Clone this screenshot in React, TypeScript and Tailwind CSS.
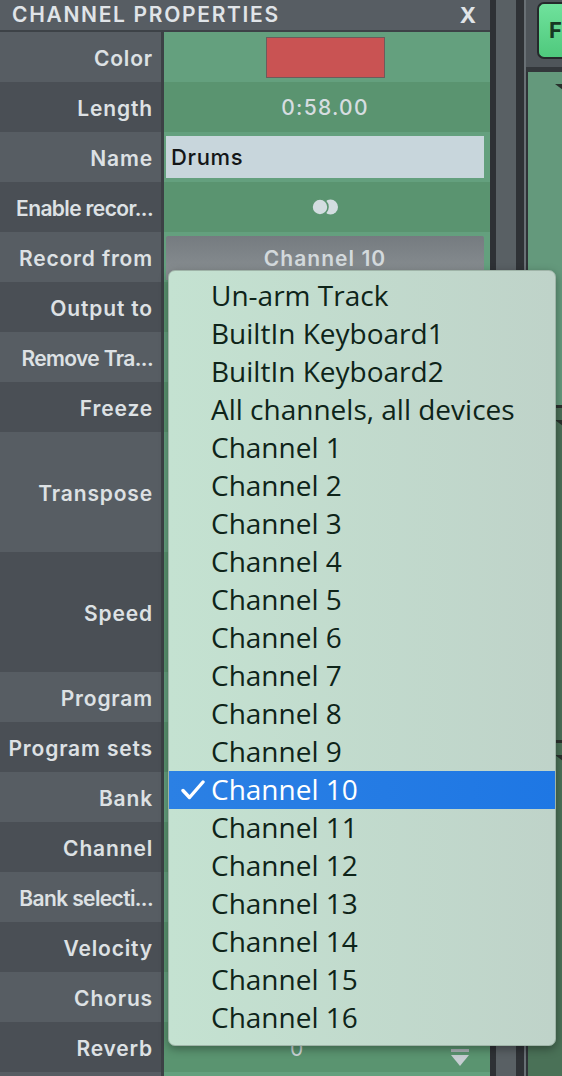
import React from 'react';

type Row = { label: string; tall?: boolean; tight?: boolean };

const ROWS: Row[] = [
  { label: 'Color' },
  { label: 'Length' },
  { label: 'Name' },
  { label: 'Enable recor...', tight: true },
  { label: 'Record from' },
  { label: 'Output to' },
  { label: 'Remove Tra...', tight: true },
  { label: 'Freeze' },
  { label: 'Transpose', tall: true },
  { label: 'Speed', tall: true },
  { label: 'Program' },
  { label: 'Program sets' },
  { label: 'Bank' },
  { label: 'Channel' },
  { label: 'Bank selecti...', tight: true },
  { label: 'Velocity' },
  { label: 'Chorus' },
  { label: 'Reverb' },
  { label: '' },
];

const OPTIONS = [
  'Un-arm Track',
  'BuiltIn Keyboard1',
  'BuiltIn Keyboard2',
  'All channels, all devices',
  ...Array.from({ length: 16 }, (_, i) => `Channel ${i + 1}`),
];

const SELECTED = 'Channel 10';

function CellContent({ index }: { index: number }) {
  switch (index) {
    case 0:
      return (
        <div className="flex h-full items-center justify-center pr-[4px]">
          <div className="h-[41px] w-[119px] border border-[#6d5b5b] bg-[#c95353]" />
        </div>
      );
    case 1:
      return (
        <div className="flex h-full items-center justify-center pr-[4px] pt-[2px] text-[21px] font-medium tracking-[0.06em] text-[#d6dde0]">
          0:58.00
        </div>
      );
    case 2:
      return (
        <div className="flex h-full items-center pl-[2px] pr-[6px]">
          <div className="flex h-[42px] w-full items-center bg-[#c8d6dc] pl-[5px] text-[22px] font-medium tracking-[0.03em] text-[#141618]">
            Drums
          </div>
        </div>
      );
    case 3:
      return (
        <div className="flex h-full items-center justify-center pr-[3px]">
          <svg width="29" height="18" viewBox="0 0 29 18">
            <circle cx="19.5" cy="9" r="7.5" fill="#d3dde0" />
            <circle cx="9" cy="9" r="8" fill="#d3dde0" stroke="#5b9470" strokeWidth="1.6" />
          </svg>
        </div>
      );
    case 4:
      return (
        <div className="flex h-full items-start pl-[2px] pr-[6px] pt-[4px]">
          <div className="flex h-[44px] w-full items-center justify-center rounded-t-[2px] bg-gradient-to-b from-[#757b80] to-[#8b9194] pt-[2px] text-[21px] font-semibold tracking-[0.05em] text-[#d3d9dc]">
            Channel 10
          </div>
        </div>
      );
    case 17:
      return (
        <div className="flex h-full items-center">
          <span className="ml-[126px] pt-[4px] text-[21px] text-[#cdd6d9]">0</span>
          <div className="ml-auto mr-[21px] flex w-[18px] flex-col items-center gap-[3px] pt-[20px]">
            <div className="h-[3px] w-[18px] bg-[#a9b1b5]" />
            <svg width="18" height="11" viewBox="0 0 18 11">
              <path d="M0 0 H18 L9 11 Z" fill="#c6ced2" />
            </svg>
          </div>
        </div>
      );
    default:
      return null;
  }
}

function PropertyRow({ row, index }: { row: Row; index: number }) {
  const light = index % 2 === 0;
  return (
    <div className={`flex shrink-0 ${row.tall ? 'h-[120px]' : 'h-[50px]'}`}>
      <div
        className={`flex w-[161px] items-center justify-end whitespace-nowrap pr-[8px] pt-[3px] text-[21px] font-semibold text-[#dde1e4] ${
          light ? 'bg-[#575d63]' : 'bg-[#4a4f55]'
        } ${row.tight ? 'tracking-[-0.03em]' : 'tracking-[0.04em]'}`}
      >
        {row.label}
      </div>
      <div className="w-[3px] bg-[#3c4145]" />
      <div className={`flex-1 ${light ? 'bg-[#64a07e]' : 'bg-[#5a9470]'}`}>
        <CellContent index={index} />
      </div>
    </div>
  );
}

function Check() {
  return (
    <svg width="24" height="20" viewBox="0 0 24 20" className="ml-[12px]">
      <path d="M2 10.5 L8.5 17.5 L22 2" fill="none" stroke="white" strokeWidth="3.4" strokeLinecap="round" strokeLinejoin="round" />
    </svg>
  );
}

function ChannelMenu() {
  return (
    <div className="absolute left-[168px] top-[270px] h-[776px] w-[388px] overflow-hidden rounded-[7px] border border-[#9fb4a8] bg-gradient-to-r from-[#c4e2d1] to-[#bfd3c9] pt-[6px] shadow-[0_3px_10px_rgba(0,0,0,0.35)] font-['Open_Sans',sans-serif]">
      {OPTIONS.map((opt) => {
        const sel = opt === SELECTED;
        return (
          <div
            key={opt}
            className={`flex h-[38px] items-center text-[28px] leading-none ${
              sel ? 'bg-gradient-to-r from-[#2b80e4] to-[#1e77e4] text-white' : 'text-[#0e2419]'
            }`}
          >
            <span className="flex w-[42px] items-center">{sel ? <Check /> : null}</span>
            <span className="pb-[2px]">{opt}</span>
          </div>
        );
      })}
    </div>
  );
}

function TrackArrow() {
  return (
    <svg width="21" height="8" viewBox="0 0 21 8">
      <path d="M0 0 H21 L10.5 8 Z" fill="#28312c" />
    </svg>
  );
}

export default function App() {
  return (
    <div className="relative flex h-[1076px] w-[562px] overflow-hidden bg-[#4a7157] font-['Inter',sans-serif]">
      <div className="flex w-[490px] shrink-0 flex-col">
        <div className="flex h-[32px] shrink-0 items-center justify-between border-b-2 border-[#3d4247] bg-[#575d63] pl-[12px] pr-[14px] text-[#e0e4e8]">
          <span className="text-[21px] font-semibold tracking-[0.08em]">CHANNEL PROPERTIES</span>
          <span className="text-[22px] font-bold">X</span>
        </div>
        {ROWS.map((row, i) => (
          <PropertyRow key={i} row={row} index={i} />
        ))}
      </div>
      <div className="w-[6px] shrink-0 bg-[#2e3135]" />
      <div className="w-[20px] shrink-0 bg-[#596064]" />
      <div className="w-[8px] shrink-0 bg-[#2f3236]" />
      <div className="w-[2px] shrink-0 bg-[#697075]" />
      <div className="flex flex-1 flex-col">
        <div className="h-[67px] shrink-0 bg-[#4f555a] pl-[11px] pt-[2px]">
          <div className="flex h-[57px] w-[40px] items-center rounded-l-[7px] border-2 border-r-0 border-[#25292b] bg-gradient-to-b from-[#6fe29c] to-[#4fc97d] pl-[10px] text-[22px] font-bold text-[#173823]">
            F
          </div>
        </div>
        <div className="h-[5px] shrink-0 bg-[#33373b]" />
        <div className="flex flex-1 flex-col border-l-2 border-[#2f3337]">
          <div className="flex h-[333px] shrink-0 justify-end bg-[#64997c] pr-[1px] pt-[12px]">
            <TrackArrow />
          </div>
          <div className="h-[3px] shrink-0 bg-[#2b302d]" />
          <div className="flex h-[332px] shrink-0 justify-end bg-[#4a6f57] pr-[1px] pt-[12px]">
            <TrackArrow />
          </div>
          <div className="h-[3px] shrink-0 bg-[#2b302d]" />
          <div className="flex flex-1 justify-end bg-[#4a7157] pr-[1px] pt-[12px]">
            <TrackArrow />
          </div>
        </div>
      </div>
      <ChannelMenu />
    </div>
  );
}
